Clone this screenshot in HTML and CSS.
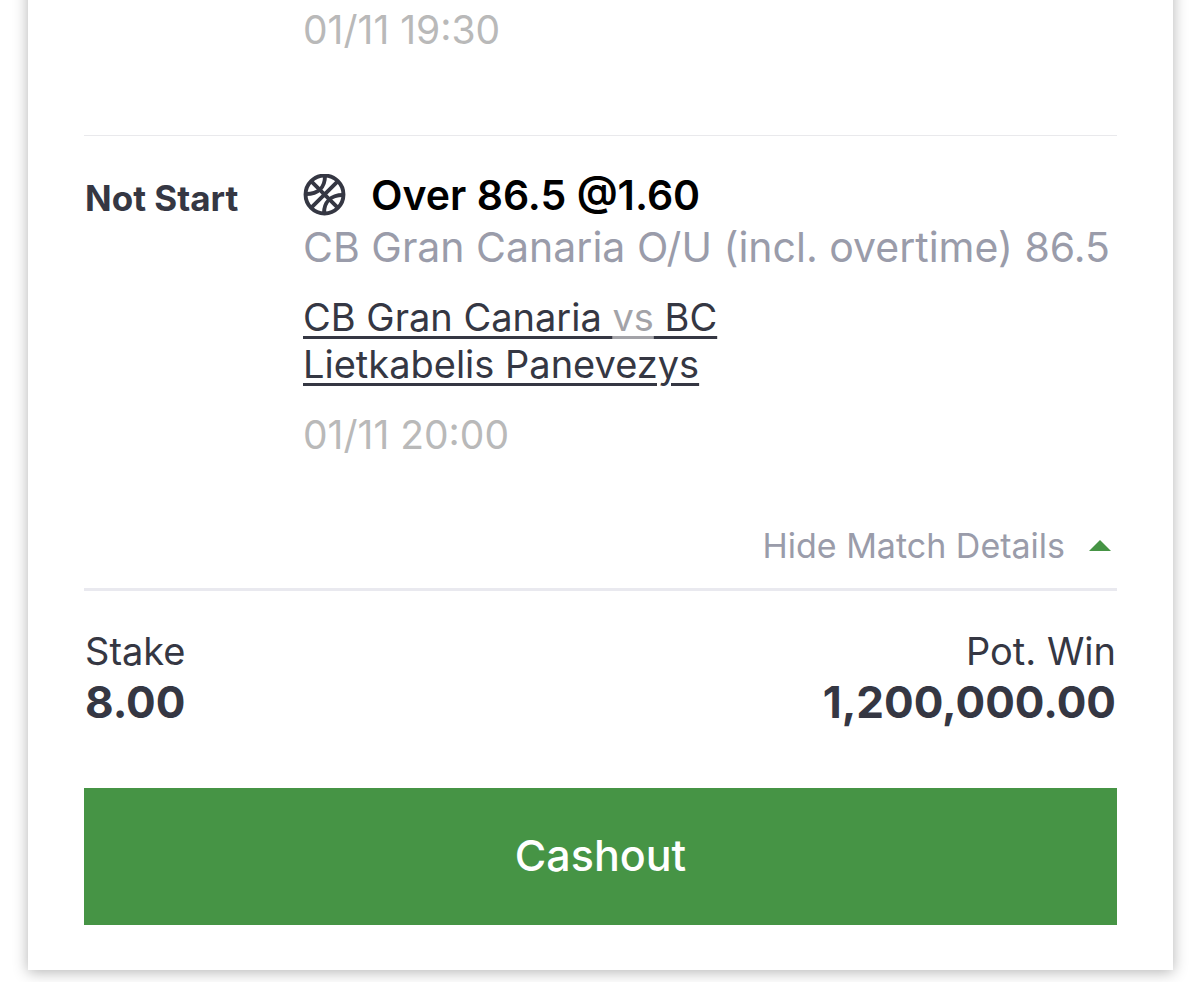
FILE: index.html
```html
<!DOCTYPE html>
<html lang="en">
<head>
    <meta charset="UTF-8">
    <title>Bet Details</title>
    <link rel="stylesheet" href="styles.css">
</head>
<body>
    <main class="ticket">
        <section class="match match-prev">
            <div class="status"></div>
            <div class="info">
                <time class="time">01/11 19:30</time>
            </div>
        </section>
        <section class="match">
            <div class="status">Not Start</div>
            <div class="info">
                <h2 class="pick">
                    <svg class="ball" viewBox="0 0 44 44" fill="none" stroke="#353743" stroke-width="4">
                        <circle cx="22" cy="21" r="19.4"/>
                        <path d="M8 7L36 35M36 7L8 35"/>
                        <path d="M22.500 2C22.500 13 16 20.500 3 20.500M41 21.500C28 21.500 21.500 29 21.500 40"/>
                    </svg>
                    <span>Over 86.5 @1.60</span>
                </h2>
                <p class="market">CB Gran Canaria O/U (incl. overtime) 86.5</p>
                <a class="teams" href="#">CB Gran Canaria <span class="vs">vs</span> BC Lietkabelis Panevezys</a>
                <time class="time">01/11 20:00</time>
            </div>
        </section>
        <button class="toggle" type="button">Hide Match Details <span class="arrow"></span></button>
        <section class="summary">
            <div>
                <p class="label">Stake</p>
                <p class="amount">8.00</p>
            </div>
            <div class="win">
                <p class="label">Pot. Win</p>
                <p class="amount">1,200,000.00</p>
            </div>
        </section>
        <button class="cashout" type="button">Cashout</button>
    </main>
</body>
</html>
```
FILE: styles.css
```css
* { box-sizing: border-box; }
body, h2, p { margin: 0; }
body { overflow-x: hidden; background: #fff; font-family: Inter, "Liberation Sans", sans-serif; color: #353743; }
button { font-family: inherit; border: 0; cursor: pointer; }

.ticket { margin: -20px 27px 12px 28px; padding: 20px 56px 45px; background: #fff; box-shadow: 0 2px 14px rgba(0, 0, 0, .3); }

.match { display: flex; padding-top: 34px; }
.match-prev { padding: 6px 0 82px; border-bottom: 1px solid #e9e9ec; }
.status { flex: 0 0 219px; padding: 8px 0 0 1px; font-size: 35px; line-height: 40px; font-weight: 700; }
.info { flex: 1; min-width: 0; }

.pick { display: flex; align-items: center; gap: 25px; color: #000; font-size: 41px; line-height: 50px; font-weight: 600; }
.ball { width: 43px; height: 43px; }
.market { color: #9a9caa; font-size: 41px; line-height: 54px; white-space: nowrap; }
.teams { display: block; max-width: 440px; margin-top: 20px; color: #353743; font-size: 38px; line-height: 47px; text-decoration: underline; text-decoration-thickness: 3px; text-underline-offset: 5px; }
.vs { color: #a3a3a8; text-decoration: underline; text-decoration-thickness: 3px; }
.time { display: block; color: #b9b9b9; font-size: 39px; line-height: 47px; }
.teams + .time { margin-top: 23px; }

.toggle { display: flex; justify-content: flex-end; align-items: center; gap: 24px; width: 100%; margin-top: 54px; padding: 10px 6px 19px; background: none; border-bottom: 3px solid #e9e9ef; color: #9a9caa; font-size: 34px; line-height: 47px; }
.arrow { border: 11px solid transparent; border-top: 0; border-bottom-color: #469445; }

.summary { display: flex; justify-content: space-between; padding: 35px 1px 59px; }
.win { text-align: right; }
.label { font-size: 38px; line-height: 50px; }
.amount { font-size: 44px; line-height: 53px; font-weight: 700; }

.cashout { display: block; width: 100%; height: 137px; padding: 0 0 3px; background: #469445; color: #fff; font-size: 43px; font-weight: 500; }
```
